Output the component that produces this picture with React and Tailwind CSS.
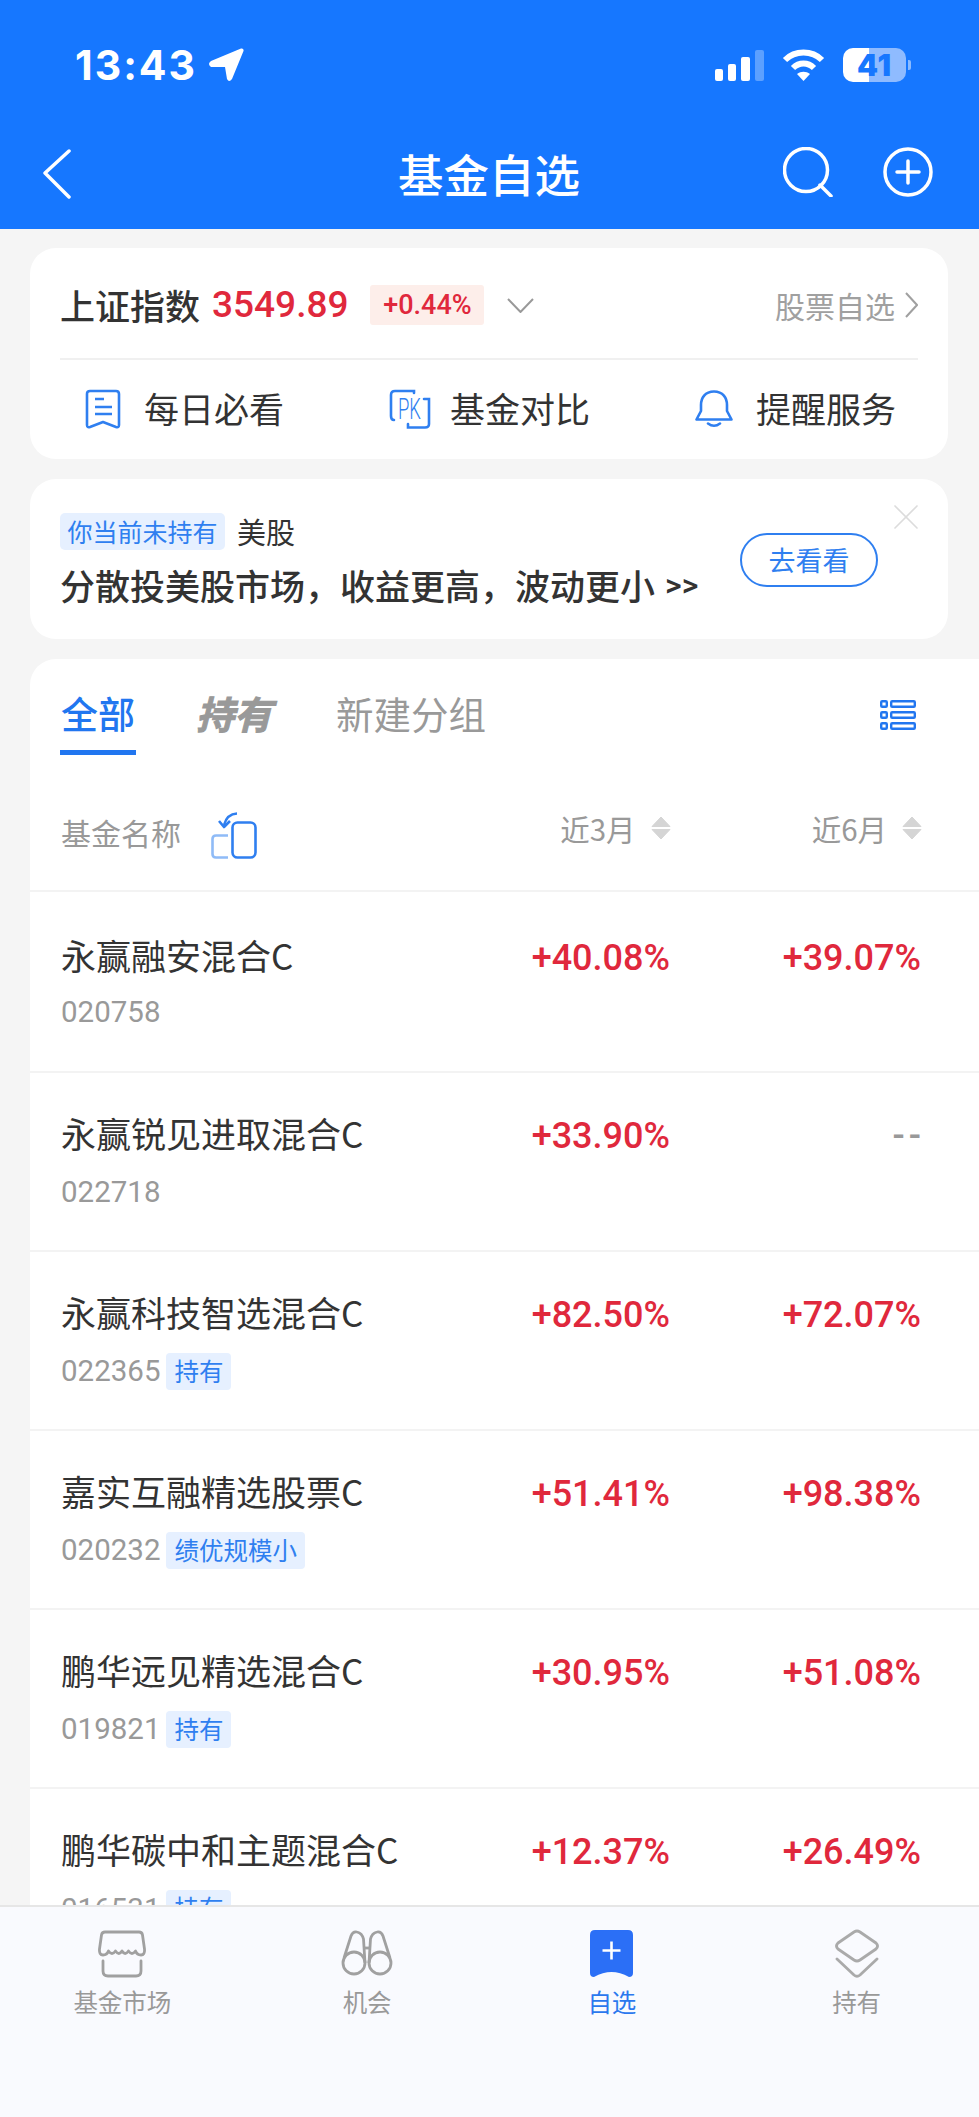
import { X } from "lucide-react";

const funds = [
  { name: "永赢融安混合C", code: "020758", m3: "+40.08%", m6: "+39.07%", first: true },
  { name: "永赢锐见进取混合C", code: "022718", m3: "+33.90%", m6: "--" },
  { name: "永赢科技智选混合C", code: "022365", tag: "持有", m3: "+82.50%", m6: "+72.07%" },
  { name: "嘉实互融精选股票C", code: "020232", tag: "绩优规模小", m3: "+51.41%", m6: "+98.38%" },
  { name: "鹏华远见精选混合C", code: "019821", tag: "持有", m3: "+30.95%", m6: "+51.08%" },
  { name: "鹏华碳中和主题混合C", code: "016531", tag: "持有", m3: "+12.37%", m6: "+26.49%" },
];

function SortCarets() {
  return (
    <svg width="20" height="24" viewBox="0 0 20 24" fill="#d5d5d5" stroke="#d5d5d5" strokeWidth="1" strokeLinejoin="round">
      <path d="M10 1 L19 10.5 H1 Z" />
      <path d="M1 13.5 H19 L10 23 Z" />
    </svg>
  );
}

function StatusBar() {
  return (
    <div className="flex h-[100px] items-start justify-between pl-[75px] pr-[68px] pt-[48px] text-white">
      <div className="flex items-center gap-[11px]">
        <span className="font-['Inter'] text-[41px] font-bold leading-[34px] tracking-[2px]">13:43</span>
        <svg width="36" height="34" viewBox="0 0 36 34" fill="white">
          <path d="M33 0.5 Q36 0 35.5 3 L24 31 Q21 35 19 31 L17 19 L3 19 Q-1 16 3 13 Z" />
        </svg>
      </div>
      <div className="flex items-center">
        <div className="flex h-[32px] items-end gap-[5px]">
          <div className="h-[12px] w-[8px] rounded-[2px] bg-white" />
          <div className="h-[17px] w-[8px] rounded-[2px] bg-white" />
          <div className="h-[24px] w-[9px] rounded-[2px] bg-white" />
          <div className="h-[31px] w-[9px] rounded-[2px] bg-white/30" />
        </div>
        <svg className="ml-[18px]" width="43" height="33" viewBox="0 0 43 33" fill="none" stroke="white" strokeWidth="6">
          <path d="M3 11 C13 1 30 1 40 11" />
          <path d="M11 19 C17 13 26 13 32 19" />
          <path d="M21.5 32 L15 25 C19 22 24 22 28 25 Z" fill="white" stroke="none" />
        </svg>
        <div className="ml-[18px] flex h-[34px] w-[63px] items-center justify-center rounded-[10px] bg-[linear-gradient(90deg,#ffffff_0,#ffffff_41%,#8fbbff_41%,#8fbbff_100%)] font-['Inter'] text-[30px] font-black tracking-[1px] text-[#1677ff]">
          41
        </div>
        <div className="ml-[2px] h-[10px] w-[3px] rounded-r-[2px] bg-white/50" />
      </div>
    </div>
  );
}

function NavBar() {
  return (
    <div className="flex h-[129px] items-start pl-[42px] pr-[46px] pt-[47px] text-white">
      <svg className="mt-[2px]" width="30" height="50" viewBox="0 0 30 50" fill="none" stroke="white" strokeWidth="3.5" strokeLinecap="round" strokeLinejoin="round">
        <path d="M27 2 L3 24 L27 48" />
      </svg>
      <div className="ml-[326px] text-[45.5px] font-medium leading-[52px]">基金自选</div>
      <div className="ml-auto flex items-start gap-[50px]">
        <svg width="50" height="50" viewBox="0 0 50 50" fill="none" stroke="white" strokeWidth="3.5">
          <circle cx="23" cy="23" r="21.5" />
          <path d="M37 38 L48 49" strokeLinecap="round" />
        </svg>
        <svg width="50" height="50" viewBox="0 0 50 50" fill="none" stroke="white" strokeWidth="3.5">
          <circle cx="25" cy="25" r="23" />
          <path d="M14 25 H36 M25 14 V36" strokeLinecap="round" />
        </svg>
      </div>
    </div>
  );
}

function IndexCard() {
  return (
    <div className="mr-[31px] h-[211px] rounded-[26px] bg-white px-[30px]">
      <div className="flex h-[112px] items-center justify-between border-b-2 border-[#f0f0f0] pt-[4px]">
        <div className="flex items-center">
          <span className="text-[35px] font-medium text-[#333]">上证指数</span>
          <span className="ml-[12px] font-['Roboto'] text-[37px] font-medium text-[#e0283c]">3549.89</span>
          <span className="ml-[22px] flex h-[40px] w-[114px] items-center justify-center rounded-[3px] bg-[#fdeeea] font-['Roboto'] text-[27px] font-medium text-[#e0283c]">+0.44%</span>
          <svg className="ml-[23px]" width="27" height="15" viewBox="0 0 27 15" fill="none" stroke="#999" strokeWidth="2">
            <path d="M1 1 L13.5 14 L26 1" />
          </svg>
        </div>
        <div className="flex items-center text-[30px] text-[#a0a0a0]">
          股票自选
          <svg className="ml-[10px]" width="13" height="26" viewBox="0 0 13 26" fill="none" stroke="#a0a0a0" strokeWidth="2">
            <path d="M1 1 L12 13 L1 25" />
          </svg>
        </div>
      </div>
      <div className="flex h-[97px] items-center text-[35px] text-[#333]">
        <svg className="ml-[25px]" width="36" height="40" viewBox="0 0 36 40" fill="none" stroke="#2f7ff0" strokeWidth="2.6" strokeLinejoin="round">
          <path d="M2 5 Q2 2 5 2 H31 Q34 2 34 5 V36 Q34 39 31 38 L18 33 L5 38 Q2 39 2 36 Z" />
          <path d="M10 10 H19 M10 18 H27 M10 25 H27" />
        </svg>
        <span className="ml-[23px]">每日必看</span>
        <svg className="ml-[105px] overflow-visible" width="42" height="40" viewBox="0 0 42 40" fill="none" stroke="#2f7ff0" strokeWidth="2.6" strokeLinecap="round">
          <path d="M25 4 V2 H6 Q2 2 2 6 V27 Q2 31 5 31" />
          <path d="M35 10 H40 V35 Q40 38.5 36 38.5 H19 V35" />
          <text x="9" y="30" fontSize="29" fontWeight="300" textLength="23" lengthAdjust="spacingAndGlyphs" fill="#2f7ff0" stroke="none" fontFamily="Roboto">PK</text>
        </svg>
        <span className="ml-[19px]">基金对比</span>
        <svg className="ml-[105px]" width="38" height="38" viewBox="0 0 38 38" fill="none" stroke="#2f7ff0" strokeWidth="2.6" strokeLinejoin="round">
          <path d="M19 1.5 C10 1.5 6 8 6 15 V21 L1.5 29.5 H36.5 L32 21 V15 C32 8 28 1.5 19 1.5 Z" />
          <path d="M13 33.5 Q19 38 25 33.5" strokeLinecap="round" />
        </svg>
        <span className="ml-[23px]">提醒服务</span>
      </div>
    </div>
  );
}

function PromoCard() {
  return (
    <div className="relative mr-[31px] mt-[20px] h-[160px] rounded-[26px] bg-white px-[30px]">
      <div className="absolute right-[20px] top-[16px] text-[#dcdcdc]">
        <X size={44} strokeWidth={0.9} />
      </div>
      <div className="flex h-full items-start justify-between pt-[34px]">
        <div>
          <div className="flex items-center">
            <span className="flex h-[37px] w-[165px] items-center justify-center rounded-[5px] bg-[#e6f0ff] text-[25px] leading-[37px] text-[#2f7ff0]">你当前未持有</span>
            <span className="ml-[12px] text-[29px] leading-[37px] text-[#333]">美股</span>
          </div>
          <div className="mt-[10px] flex items-center whitespace-nowrap text-[35px] font-medium leading-[50px] text-[#333]">
            分散投美股市场，收益更高，波动更小
            <span className="ml-[10px] font-['Roboto'] text-[32px] font-medium">&gt;&gt;</span>
          </div>
        </div>
        <div className="mr-[40px] mt-[20px] flex h-[54px] w-[138px] items-center justify-center rounded-full border-[2.5px] border-[#2f7ff0] text-[27px] text-[#2f7ff0]">
          去看看
        </div>
      </div>
    </div>
  );
}

function FundRow({ fund }) {
  const empty = fund.m6 === "--";
  return (
    <div className={`flex border-b-2 border-[#f3f3f3] pl-[31px] pr-[58px] ${fund.first ? "h-[180.5px] pt-[41px]" : "h-[179.2px] pt-[38px]"}`}>
      <div className="flex-1">
        <div className="-mt-[3px] text-[35px] leading-[50px] text-[#333]">{fund.name}</div>
        <div className={`flex h-[37px] items-center ${fund.first ? "mt-[14px]" : "mt-[16px]"}`}>
          <span className="font-['Roboto'] text-[29.5px] text-[#999]">{fund.code}</span>
          {fund.tag && (
            <span className="ml-[6px] flex h-[37px] items-center rounded-[4px] bg-[#e6f0ff] px-[8px] text-[24.5px] text-[#2f7ff0]">{fund.tag}</span>
          )}
        </div>
      </div>
      <div className="w-[140px] text-right font-['Roboto'] text-[36px] font-medium leading-[50px] text-[#e0283c]">{fund.m3}</div>
      <div className={`ml-[111px] w-[140px] text-right font-['Roboto'] text-[36px] font-medium leading-[50px] ${empty ? "text-[#999]" : "text-[#e0283c]"}`}>
        {empty ? <span className="-mr-[4px] tracking-[4px]">--</span> : fund.m6}
      </div>
    </div>
  );
}

function FundList() {
  return (
    <div className="mt-[20px] rounded-tl-[26px] bg-white">
      <div className="flex h-[96px] items-start pl-[30px] pr-[63px] pt-[24px]">
        <div className="flex h-[72px] w-[76px] flex-col items-center border-b-[5px] border-[#2176f0] text-[37px] font-medium leading-[60px] text-[#2176f0]">全部</div>
        <div className="ml-[60px] text-[38px] font-bold italic leading-[60px] text-[#999] [-webkit-text-stroke:1px_#999]">持有</div>
        <div className="ml-[64px] text-[37.5px] leading-[60px] text-[#999]">新建分组</div>
        <svg className="ml-auto mt-[17px]" width="36" height="30" viewBox="0 0 36 30" fill="none" stroke="#2176f0" strokeWidth="2.4">
          <rect x="1.2" y="1.2" width="5.6" height="5.6" rx="1" />
          <rect x="11.2" y="1.2" width="23.6" height="5.6" rx="1" />
          <rect x="1.2" y="12.2" width="5.6" height="5.6" rx="1" />
          <rect x="11.2" y="12.2" width="23.6" height="5.6" rx="1" />
          <rect x="1.2" y="23.2" width="5.6" height="5.6" rx="1" />
          <rect x="11.2" y="23.2" width="23.6" height="5.6" rx="1" />
        </svg>
      </div>
      <div className="flex h-[137px] border-b-2 border-[#f3f3f3] pl-[31px] pr-[57px] text-[#999]">
        <span className="mt-[57px] h-[40px] text-[30px] leading-[40px]">基金名称</span>
        <svg className="ml-[30px] mt-[57px]" width="46" height="47" viewBox="0 0 46 47" fill="none" strokeWidth="2.6" strokeLinejoin="round">
          <rect x="21.5" y="10.5" width="23" height="35" rx="5" stroke="#2f7ff0" />
          <path d="M17 23.5 H5 Q1.5 23.5 1.5 27 V42 Q1.5 45.5 5 45.5 H17" stroke="#8fbbf7" />
          <path d="M26 1.5 Q16 2 13 13" stroke="#2f7ff0" />
          <path d="M8 9 L13 15 L19 9" stroke="#2f7ff0" />
        </svg>
        <div className="ml-auto mt-[53px] flex h-[40px] items-center gap-[15px]">
          <span className="text-[29.5px]">近3月</span>
          <SortCarets />
        </div>
        <div className="ml-[141px] mt-[53px] flex h-[40px] items-center gap-[15px]">
          <span className="text-[29.5px]">近6月</span>
          <SortCarets />
        </div>
      </div>
      {funds.map((fund) => (
        <FundRow key={fund.code} fund={fund} />
      ))}
    </div>
  );
}

function TabBar() {
  const grey = "#a0a0a0";
  return (
    <div className="grid h-[212px] shrink-0 grid-cols-4 border-t-2 border-[#e6e6e6] bg-[#f9fafe] pt-[23px] text-center text-[24.5px] text-[#999]">
      <div className="flex flex-col items-center">
        <svg width="48" height="48" viewBox="0 0 48 48" fill="none" stroke={grey} strokeWidth="2.8" strokeLinejoin="round" strokeLinecap="round">
          <path d="M7 2 H41 Q44 2 44.5 5 L46.5 19 Q47 25 43 25 Q39 25 37.5 21 Q34 26 30.5 21 Q27 26 24 21 Q21 26 17.5 21 Q14 26 10.5 21 Q9 25 5 25 Q1 25 1.5 19 L3.5 5 Q4 2 7 2 Z" />
          <path d="M5 31 V41 Q5 46 10 46 H38 Q43 46 43 41 V31" />
        </svg>
        <span className="mt-[6px] leading-[36px]">基金市场</span>
      </div>
      <div className="flex flex-col items-center">
        <svg width="52" height="48" viewBox="0 0 52 48" fill="none" stroke={grey} strokeWidth="2.8">
          <circle cx="13" cy="33" r="11" />
          <circle cx="39" cy="33" r="11" />
          <path d="M3 28 L10 6 Q12 1 16 2 Q21 3 22.5 9 L24 33" />
          <path d="M49 28 L42 6 Q40 1 36 2 Q31 3 29.5 9 L28 33" />
          <path d="M22 18 H30" />
        </svg>
        <span className="mt-[6px] leading-[36px]">机会</span>
      </div>
      <div className="flex flex-col items-center text-[#2b78ee]">
        <svg width="43" height="48" viewBox="0 0 43 48">
          <path d="M5 0 H38 Q43 0 43 5 V43 Q43 47 39 47 Q30 42 21.5 42 Q13 42 4 47 Q0 47 0 43 V5 Q0 0 5 0 Z" fill="#2b6ff6" />
          <path d="M12.5 20.5 H30.5 M21.5 11.5 V29.5" stroke="white" strokeWidth="2.6" />
        </svg>
        <span className="mt-[6px] leading-[36px]">自选</span>
      </div>
      <div className="flex flex-col items-center">
        <svg width="46" height="50" viewBox="0 0 46 50" className="-mt-[1px] -mb-[1px]" fill="none" stroke="#aaa" strokeWidth="2.8" strokeLinejoin="round" strokeLinecap="round">
          <path d="M20 3 Q23 1 26 3 L42 14 Q45 17 42 20 L26 31 Q23 33 20 31 L4 20 Q1 17 4 14 Z" />
          <path d="M3 30 L20 46 Q23 48.5 26 46 L43 30" />
        </svg>
        <span className="mt-[6px] leading-[36px]">持有</span>
      </div>
    </div>
  );
}

export default function App() {
  return (
    <div className="flex h-[2117px] w-[979px] flex-col overflow-hidden bg-[#f5f5f5] font-['Noto_Sans_CJK_SC','Noto_Sans',sans-serif]">
      <div className="shrink-0 bg-[#1677ff]">
        <StatusBar />
        <NavBar />
      </div>
      <div className="min-h-0 flex-1 overflow-hidden pl-[30px] pt-[19px]">
        <IndexCard />
        <PromoCard />
        <FundList />
      </div>
      <TabBar />
    </div>
  );
}
